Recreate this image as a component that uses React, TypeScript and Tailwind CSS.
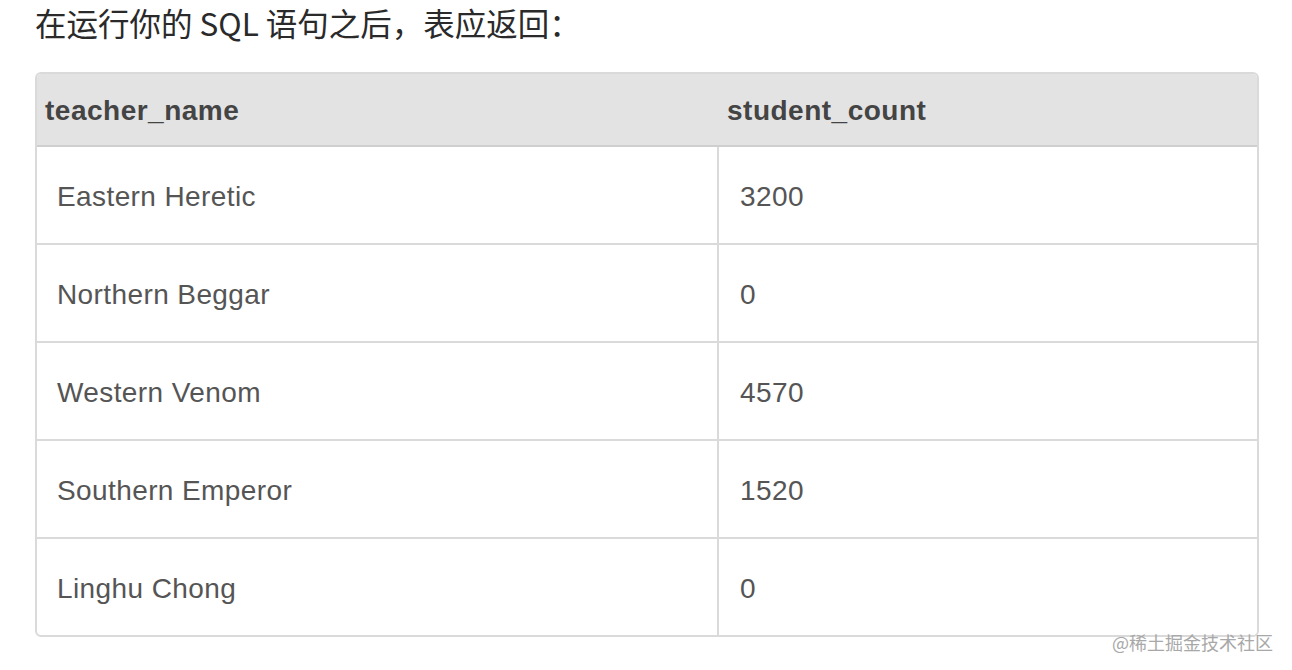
import React from "react";

const rows: [string, string][] = [
  ["Eastern Heretic", "3200"],
  ["Northern Beggar", "0"],
  ["Western Venom", "4570"],
  ["Southern Emperor", "1520"],
  ["Linghu Chong", "0"],
];

export default function App() {
  return (
    <div
      className="relative w-[1292px] h-[670px] bg-white overflow-hidden pl-[35px]"
      style={{ fontFamily: '"Liberation Sans", Arial, "Noto Sans CJK SC", sans-serif' }}
    >
      <div
        className="h-[44px] leading-[44px] text-[31.5px] text-[#2a2a2a]"
        style={{ fontFamily: '"Noto Sans CJK SC", sans-serif' }}
      >
        在运行你的 SQL 语句之后，表应返回：
      </div>
      <div className="mt-[28px] w-[1224px] border-2 border-[#dadada] rounded-[6px] overflow-hidden">
        <div className="flex h-[73px] bg-[#e3e3e3] border-b-2 border-[#cfcfcf] items-center text-[28px] tracking-[0.5px] font-bold text-[#444]">
          <div className="w-[682px] pl-2 pt-[2px]">teacher_name</div>
          <div className="pl-2 pt-[2px]">student_count</div>
        </div>
        {rows.map(([name, count], i) => (
          <div
            key={name}
            className={
              "flex text-[28px] tracking-[0.4px] text-[#555] " +
              (i < rows.length - 1 ? "h-[98px] border-b-2 border-[#dadada]" : "h-[96px]")
            }
          >
            <div className="w-[682px] border-r-2 border-[#dadada] pl-5 pt-[3px] flex items-center">{name}</div>
            <div className="pl-[21px] pt-[3px] flex items-center">{count}</div>
          </div>
        ))}
      </div>
      <div
        className="absolute left-[1112px] top-[630px] text-[18px] leading-[24px] text-[#a8a8a8]"
        style={{ fontFamily: '"Noto Sans CJK SC", sans-serif' }}
      >
        @稀土掘金技术社区
      </div>
    </div>
  );
}
